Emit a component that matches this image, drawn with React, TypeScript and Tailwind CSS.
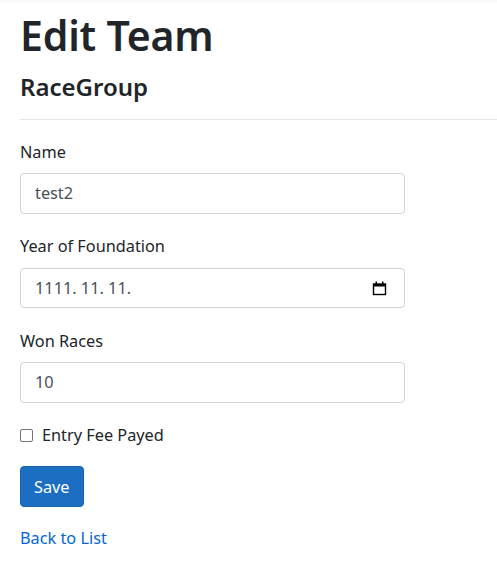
import React from "react";

function CalendarIcon() {
  return (
    <svg width="15" height="15" viewBox="0 0 15 15" className="block">
      <rect x="1.5" y="3" width="12" height="10.5" fill="none" stroke="#000" strokeWidth="1.4" />
      <rect x="1.5" y="3" width="12" height="2.5" fill="#000" />
      <rect x="3.5" y="0.5" width="1.5" height="3" fill="#000" />
      <rect x="10" y="0.5" width="1.5" height="3" fill="#000" />
    </svg>
  );
}

export default function App() {
  return (
    <div className="bg-white min-h-[588px] text-[#212529] font-['Noto_Sans',sans-serif]">
      <div className="h-[3px] bg-[#fafafa]" />
      <div className="pl-5">
        <h1 className="mt-[6px] text-[41px] leading-[52px] font-semibold tracking-[-0.2px]">Edit Team</h1>
        <h4 className="mt-[11px] text-[24px] leading-[29px] font-semibold">RaceGroup</h4>
        <hr className="mt-[18px] border-0 border-t border-[#e5e5e5]" />
        <div className="pr-[92px]">
          <div className="mt-[20px] text-[16.3px] leading-[24px]">Name</div>
          <div className="mt-[9px] h-[41px] border border-[#ced4da] rounded-[4px] flex items-center px-[14px] text-[16.3px] text-[#495057]">
            test2
          </div>
          <div className="mt-[20px] text-[16.3px] leading-[24px]">Year of Foundation</div>
          <div className="mt-[10px] h-[40px] border border-[#ced4da] rounded-[4px] flex items-center justify-between pl-[14px] pr-[17px] text-[16.3px] text-[#495057]">
            <span>1111. 11. 11.</span>
            <CalendarIcon />
          </div>
          <div className="mt-[21px] text-[16.3px] leading-[24px]">Won Races</div>
          <div className="mt-[9px] h-[41px] border border-[#ced4da] rounded-[4px] flex items-center px-[14px] text-[16.3px] text-[#495057]">
            10
          </div>
          <div className="mt-[20px] flex items-center h-[24px] text-[16.3px]">
            <span className="w-[13px] h-[13px] border border-[#767676] rounded-[2px] bg-white" />
            <span className="ml-[9px] leading-[24px]">Entry Fee Payed</span>
          </div>
          <button className="mt-[19px] h-[41px] px-[13px] rounded-[4px] bg-[#1b6ec2] border border-[#1861ac] text-white text-[16.3px] leading-[24px]">
            Save
          </button>
          <div className="mt-[19px] text-[16.3px] leading-[24px]">
            <a className="text-[#0366d6]" href="#">Back to List</a>
          </div>
        </div>
      </div>
    </div>
  );
}
